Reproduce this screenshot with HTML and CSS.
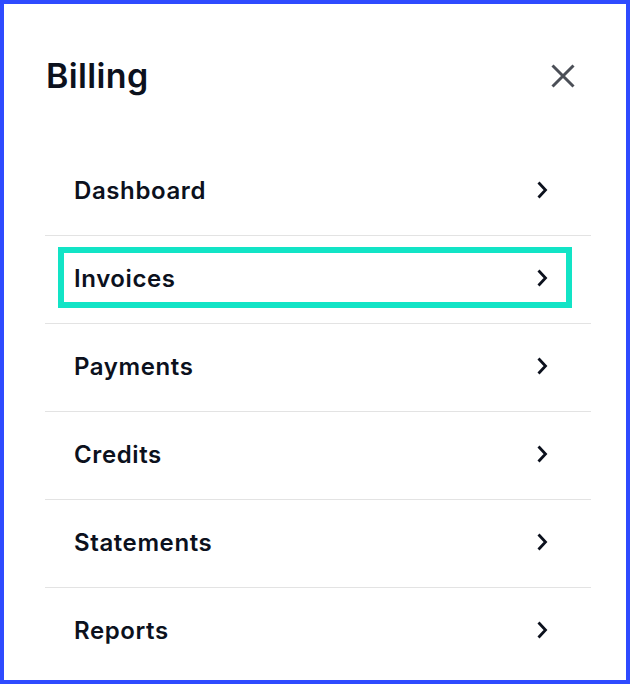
FILE: index.html
```html
<!DOCTYPE html>
<html lang="en">
<head>
<meta charset="utf-8">
<title>Billing</title>
<link rel="stylesheet" href="styles.css">
</head>
<body>
<div class="panel">
  <header class="header">
    <h1 class="title">Billing</h1>
    <button class="close" aria-label="Close">
      <svg width="28" height="28" viewBox="0 0 28 28" fill="none" stroke="#4b4f57" stroke-width="3">
        <path d="M3.5 3.5 L24.5 24.5 M24.5 3.5 L3.5 24.5"/>
      </svg>
    </button>
  </header>
  <ul class="menu">
    <li class="item"><a class="link" href="#"><span>Dashboard</span><svg class="chev" width="14" height="20" viewBox="0 0 14 20" fill="none" stroke="#0c111d" stroke-width="2.8"><path d="M3.5 2.5 L10.5 10 L3.5 17.5"/></svg></a></li>
    <li class="item"><a class="link focused" href="#"><span>Invoices</span><svg class="chev" width="14" height="20" viewBox="0 0 14 20" fill="none" stroke="#0c111d" stroke-width="2.8"><path d="M3.5 2.5 L10.5 10 L3.5 17.5"/></svg></a></li>
    <li class="item"><a class="link" href="#"><span>Payments</span><svg class="chev" width="14" height="20" viewBox="0 0 14 20" fill="none" stroke="#0c111d" stroke-width="2.8"><path d="M3.5 2.5 L10.5 10 L3.5 17.5"/></svg></a></li>
    <li class="item"><a class="link" href="#"><span>Credits</span><svg class="chev" width="14" height="20" viewBox="0 0 14 20" fill="none" stroke="#0c111d" stroke-width="2.8"><path d="M3.5 2.5 L10.5 10 L3.5 17.5"/></svg></a></li>
    <li class="item"><a class="link" href="#"><span>Statements</span><svg class="chev" width="14" height="20" viewBox="0 0 14 20" fill="none" stroke="#0c111d" stroke-width="2.8"><path d="M3.5 2.5 L10.5 10 L3.5 17.5"/></svg></a></li>
    <li class="item"><a class="link" href="#"><span>Reports</span><svg class="chev" width="14" height="20" viewBox="0 0 14 20" fill="none" stroke="#0c111d" stroke-width="2.8"><path d="M3.5 2.5 L10.5 10 L3.5 17.5"/></svg></a></li>
  </ul>
</div>
</body>
</html>
```

FILE: styles.css
```css
* { box-sizing: border-box; }
html, body { margin: 0; padding: 0; background: #ffffff; }
body { font-family: Inter, "Noto Sans", "Liberation Sans", sans-serif; color: #0c111d; }

.panel {
  width: 630px;
  height: 684px;
  border: 4px solid #2e4bff;
  padding: 52px 0 0 0;
  overflow: hidden;
  background: #fff;
}

.header {
  display: flex;
  align-items: center;
  justify-content: space-between;
  padding: 0 49px 0 42px;
  margin-bottom: 52px;
}

.title {
  margin: 0;
  font-size: 34px;
  line-height: 40px;
  font-weight: 600;
  letter-spacing: 0.35px;
  color: #0c111d;
}

.close {
  border: 0;
  background: none;
  padding: 0;
  width: 28px;
  height: 28px;
  display: block;
  margin-top: -1px;
}
.close svg { display: block; }

.menu {
  list-style: none;
  margin: 0 35px 0 41px;
  padding: 0;
}

.item {
  padding: 17px 25px 21px 19px;
  border-bottom: 1px solid #e3e3e3;
}
.item:last-child { border-bottom: 0; }

.link {
  display: flex;
  align-items: center;
  justify-content: space-between;
  height: 49px;
  padding: 1px 17px 0 10px;
  font-size: 24px;
  font-weight: 600;
  letter-spacing: 0.6px;
  color: #0c111d;
  text-decoration: none;
}

.link.focused {
  outline: 6px solid #12e4c6;
  outline-offset: 0;
}

.chev { display: block; }
```
